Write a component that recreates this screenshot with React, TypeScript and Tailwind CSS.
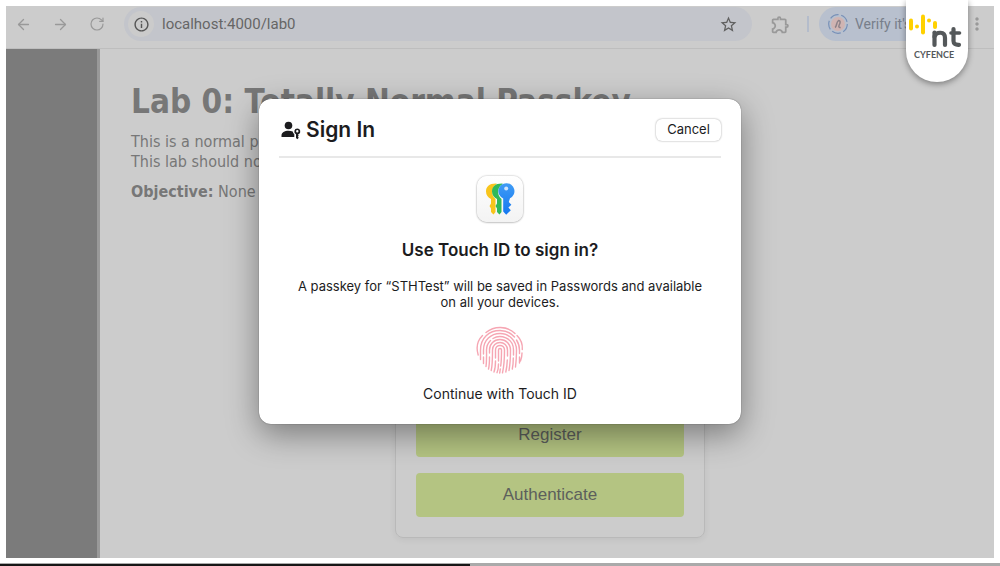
import { ArrowLeft, ArrowRight, RotateCw } from "lucide-react";
import { MdInfoOutline, MdMoreVert, MdOutlineExtension, MdStarOutline } from "react-icons/md";

function NtLogo() {
    return (
        <div className="absolute top-0 right-8 z-20 flex h-[82px] w-[62px] flex-col items-start rounded-b-full bg-white pt-[13px] pl-[2px] shadow-[0_2px_6px_rgba(0,0,0,0.4)]">
            <svg width="58" height="36" viewBox="0 0 58 36" fill="none" strokeLinecap="round" aria-hidden="true">
                <g stroke="#ffd100" strokeWidth="4">
                    <path d="M3 7.500v8" />
                    <path d="M15 3.500v16" />
                    <path d="M27 10v4" />
                </g>
                <g fill="#ffd100">
                    <circle cx="9" cy="13.500" r="2" />
                    <circle cx="21" cy="7.500" r="2" />
                </g>
                <g stroke="#54585a" strokeWidth="4.200" strokeLinejoin="round">
                    <path d="M26.500 32V19.500" />
                    <path d="M26.500 23.500C28.500 18.500 37 18 37 25V32" />
                    <path d="M45.500 16v12c0 3 2 4 5.500 3.800" />
                    <path d="M43 20h8.500" strokeWidth="3.600" />
                </g>
            </svg>
            <span className="pl-[6px] font-['Lato',sans-serif] text-[9px] leading-[12px] font-bold text-[#54585a]">CYFENCE</span>
        </div>
    );
}

function ProfileIcon() {
    return (
        <svg width="22" height="22" viewBox="0 0 22 22" fill="none" aria-hidden="true">
            <circle cx="11" cy="11" r="9.3" stroke="#7790b8" strokeWidth="1.2" strokeDasharray="9 2.7" />
            <circle cx="11" cy="11" r="7" fill="#d0b4b2" />
            <path d="M8 14.500c2-1 1-5 3.500-7 2.500 0 1.500 3 .7 4.500s-.4 3 1.500 2.500" stroke="#8b8187" strokeWidth="1.500" />
        </svg>
    );
}

function PersonKeyIcon() {
    return (
        <svg width="20" height="20" viewBox="0 0 20 20" fill="#1c1c1e" aria-hidden="true">
            <circle cx="7.500" cy="5.500" r="3.800" />
            <path d="M.5 17v-1.500C.5 12.500 3.500 10.700 7.500 10.700c1.700 0 3 .3 4.200.9.200 1.200.8 2.100 1.600 2.700V17Z" />
            <path fillRule="evenodd" d="M16.300 8.500a3 3 0 0 0-1.300 5.700V18l1.300 1.300 1.500-1.500-1-1 1-1-1-1 .8-.6a3 3 0 0 0-1.300-5.700Zm0 1.500a1.200 1.200 0 1 1 0 2.400 1.200 1.200 0 0 1 0-2.400Z" />
        </svg>
    );
}

function PasswordsIcon() {
    return (
        <div className="flex h-[46px] w-[46px] items-center justify-center rounded-[10px] bg-gradient-to-b from-white to-[#f3f3f3] shadow-[0_0_2px_rgba(0,0,0,0.35),0_1px_2px_rgba(0,0,0,0.15)]">
            <svg width="30" height="34" viewBox="0 0 30 34" aria-hidden="true">
                <defs>
                    <linearGradient id="blueKey" x1="0" y1="0" x2="0" y2="1">
                        <stop offset="0" stopColor="#3f9bf5" />
                        <stop offset="1" stopColor="#1478f0" />
                    </linearGradient>
                </defs>
                <path d="M11 1.500C4 1.500 1 5 1 9.500c0 3.500 2 6 5 7.500v4.500l-1.500 2.500L6 26.500V30l2.500 2.500L10.500 30V17C5.500 12.500 6 5 12 2Z" fill="#f8c51c" />
                <path d="M17 1.500C10 1.500 7 5 7 9.500c0 3.500 2 6 5 7.500v4.500l-1.500 2.500 1.500 2.500V30l2.500 2.500L16.500 30V17C11.500 12.500 12 5 18 2Z" fill="#30b95a" />
                <path d="M21.200 1.200a7.900 7.900 0 0 0-3 15.200V29.500l3 3.300 4.600-4.600-2.400-2.700 3-2.800-2.600-2.600 1.200-3.900A7.900 7.900 0 0 0 21.200 1.200Z" fill="url(#blueKey)" />
                <circle cx="21.200" cy="6.500" r="2" fill="#cfe3fb" />
            </svg>
        </div>
    );
}

function Fingerprint() {
    return (
        <svg width="48" height="48" viewBox="0 0 48 48" fill="none" stroke="#f6a6b3" strokeWidth="1.400" strokeLinecap="round" aria-hidden="true">
            <path d="M10 6.500C18-.2 31-.5 39 7.500" />
            <path d="M2.200 29C-.2 21 2 14 6.500 9.500" />
            <path d="M41 9.500c4 4 5.700 9 5.300 14" />
            <path d="M4.500 33.500V24C4.500 12 13 4.500 24 4.500c6 0 11 2.500 14.500 6.500" />
            <path d="M40.500 14c2 3 3 6.500 3 10.500v3M46 27q0 4-1.500 8M43.500 31v6" />
            <path d="M7.500 37.500V31M7.500 28v-4C7.500 14 15 7.500 24 7.500S40.500 14.500 40.500 24q0 9-1 17" />
            <path d="M10 40.500q.7-5 .5-16.500c0-4 1.500-7 4-9.500M17 12.500c7-4.500 20.500-1 20.500 11.500v5M37.300 32q0 6-1 11" />
            <path d="M12.500 43q1-4 1-12M13.500 27v-3c0-6 4.500-10.500 10.500-10.500S34.500 18 34.500 24q0 12-1.500 20.500" />
            <path d="M15.200 44.500q1.300-5 1.300-20.500c0-4.500 3.500-7.500 7.500-7.500s7.500 3 7.500 7.500v6M31.300 34q-.3 7-1.500 12" />
            <path d="M18 46q1.500-4 1.500-11M19.500 32v-8c0-6 9-6 9 0q0 14-2 22.800" />
            <path d="M21 46.700q1.500-3.500 1.500-8.700M22.500 35V24c0-2 3-2 3 0q0 11-.8 16M24.300 43l-.6 4" />
        </svg>
    );
}

function Toolbar() {
    return (
        <header className="flex h-[43px] shrink-0 items-center border-b border-[#bebebe] pb-[6px] text-[#999]">
            <nav className="flex w-[118px] shrink-0 items-center gap-5 pl-[9px]">
                <button aria-label="Back"><ArrowLeft size={17} strokeWidth={1.8} /></button>
                <button aria-label="Forward"><ArrowRight size={17} strokeWidth={1.8} /></button>
                <button aria-label="Reload"><RotateCw size={16} strokeWidth={1.8} /></button>
            </nav>
            <div className="flex h-[34px] flex-1 items-center rounded-full bg-[#c3c5cb] pr-[14px] pl-1">
                <button aria-label="Site information" className="flex h-[26px] w-[26px] shrink-0 items-center justify-center rounded-full bg-[#cbcbcb] text-[#555]">
                    <MdInfoOutline size={17} />
                </button>
                <input aria-label="Address" defaultValue="localhost:4000/lab0" className="ml-2 min-w-0 flex-1 bg-transparent font-['Roboto',sans-serif] text-[15px] text-[#666] outline-none" />
                <button aria-label="Bookmark" className="text-[#606060]"><MdStarOutline size={19} /></button>
            </div>
            <button aria-label="Extensions" className="ml-[18px]"><MdOutlineExtension size={21} /></button>
            <span className="ml-4 h-4 w-[2px] bg-[#b4bccb]"></span>
            <button className="ml-[10px] flex h-[34px] w-[140px] items-center gap-[6px] rounded-full bg-[#b8c0ce] pl-2 font-['Roboto',sans-serif] text-[14px] whitespace-nowrap text-[#777e8a]">
                <ProfileIcon />
                Verify it's
            </button>
            <button aria-label="More" className="mr-[7px] ml-2 text-[#999]"><MdMoreVert size={20} /></button>
        </header>
    );
}

function SignInDialog() {
    return (
        <section role="dialog" aria-labelledby="sign-in" className="absolute top-[93px] left-1/2 z-10 flex w-[482px] -translate-x-1/2 flex-col items-center rounded-xl bg-white px-5 pt-[17px] pb-5 font-['Inter',sans-serif] text-[#1c1c1e] shadow-[0_0_1px_rgba(0,0,0,0.7),0_10px_32px_rgba(0,0,0,0.4)]">
            <div className="flex w-full items-center border-b-2 border-[#e8e8e8] pb-3 pl-[2px]">
                <PersonKeyIcon />
                <h2 id="sign-in" className="ml-[5px] text-[21px] leading-[28px] font-semibold">Sign In</h2>
                <button className="ml-auto h-[22px] w-[65px] rounded-md bg-white text-[13px] shadow-[0_0_2px_rgba(0,0,0,0.4)]">Cancel</button>
            </div>
            <div className="mt-[18px]"><PasswordsIcon /></div>
            <h3 className="mt-4 text-[17px] leading-[24px] font-semibold">Use Touch ID to sign in?</h3>
            <p className="mt-4 w-[420px] text-center text-[13px] leading-[16px]">A passkey for “STHTest” will be saved in Passwords and available on all your devices.</p>
            <div className="mt-4"><Fingerprint /></div>
            <p className="mt-[10px] text-[14px] leading-[20px]">Continue with Touch ID</p>
        </section>
    );
}

export default function App() {
    return (
        <div className="relative flex min-h-screen flex-col bg-white">
            <NtLogo />
            <div className="relative mx-[6px] mt-[6px] flex flex-1 flex-col overflow-hidden bg-[#ccc]">
                <Toolbar />
                <div className="flex flex-1">
                    <aside className="w-[94px] shrink-0 border-r-[3px] border-[#999] bg-[#7b7b7b]"></aside>
                    <main className="flex-1 pt-[31px] pr-[25px] pb-4 pl-[31px] font-['DejaVu_Sans_Condensed','DejaVu_Sans',sans-serif] text-[16px] leading-[20px] text-[#777]">
                        <h1 className="text-[33px] leading-[44px] font-bold whitespace-nowrap">Lab 0: Totally Normal Passkey</h1>
                        <p className="mt-2">This is a normal p</p>
                        <p>This lab should no</p>
                        <p className="mt-[10px]"><b>Objective:</b> None</p>
                        <div className="mx-auto mt-[190px] flex w-[310px] flex-col gap-4 rounded-lg border border-[#b9b9b9] p-5 font-['Liberation_Sans',sans-serif] text-[17px] text-[#5c5f5c] shadow-[0_2px_6px_rgba(0,0,0,0.06)]">
                            <button className="h-[44px] rounded bg-[#b4c482]">Register</button>
                            <button className="h-[44px] rounded bg-[#b4c482]">Authenticate</button>
                        </div>
                    </main>
                </div>
                <SignInDialog />
            </div>
            <footer className="mt-[5px] flex h-[3px] flex-col bg-[#aaa]">
                <span className="mt-px h-[2px] w-[47%] bg-[#161616]"></span>
            </footer>
        </div>
    );
}
